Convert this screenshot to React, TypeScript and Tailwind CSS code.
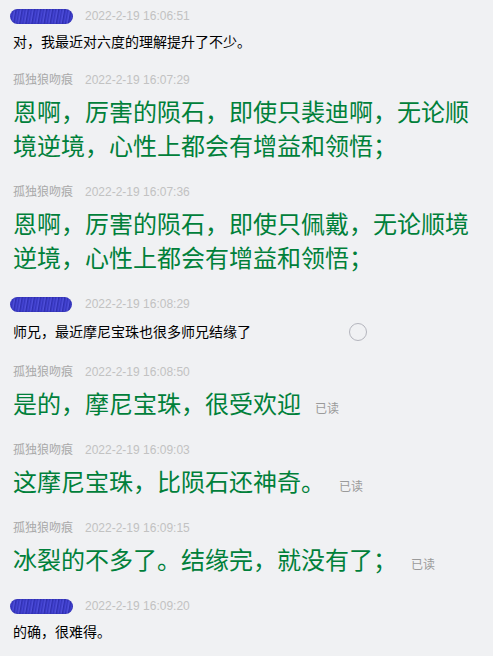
import React from "react";

type Msg = {
  name?: string;
  blob?: number;
  time: string;
  text: string;
  big?: boolean;
  read?: boolean;
  circle?: boolean;
};

const msgs: Msg[] = [
  { blob: 63, time: "2022-2-19 16:06:51", text: "对，我最近对六度的理解提升了不少。" },
  { name: "孤独狼吻痕", time: "2022-2-19 16:07:29", text: "恩啊，厉害的陨石，即使只裴迪啊，无论顺境逆境，心性上都会有增益和领悟；", big: true },
  { name: "孤独狼吻痕", time: "2022-2-19 16:07:36", text: "恩啊，厉害的陨石，即使只佩戴，无论顺境逆境，心性上都会有增益和领悟；", big: true },
  { blob: 62, time: "2022-2-19 16:08:29", text: "师兄，最近摩尼宝珠也很多师兄结缘了", circle: true },
  { name: "孤独狼吻痕", time: "2022-2-19 16:08:50", text: "是的，摩尼宝珠，很受欢迎", big: true, read: true },
  { name: "孤独狼吻痕", time: "2022-2-19 16:09:03", text: "这摩尼宝珠，比陨石还神奇。", big: true, read: true },
  { name: "孤独狼吻痕", time: "2022-2-19 16:09:15", text: "冰裂的不多了。结缘完，就没有了；", big: true, read: true },
  { blob: 65, time: "2022-2-19 16:09:20", text: "的确，很难得。" },
];

function Blob({ w }: { w: number }) {
  return (
    <div
      className="h-[15px] -ml-[3px] rounded-full bg-[#3b3bc6] bg-[repeating-linear-gradient(100deg,#2f2fb0_0px,#4646d6_2px,#3535bd_3px,#5050dc_5px,#2f2fb0_6px)] shadow-[inset_0_0_2px_#2a2aa0]"
      style={{ width: w }}
    />
  );
}

export default function App() {
  return (
    <div
      className="min-h-[656px] w-[493px] bg-[#f0f1f3] px-[13px] pt-[6px] flex flex-col gap-[18px]"
      style={{ fontFamily: '"Liberation Sans", "Noto Sans CJK SC", sans-serif' }}
    >
      {msgs.map((m, i) => (
        <div key={i} className="flex flex-col">
          <div className="flex items-center h-[20px] leading-[20px] text-[12px]">
            <div className="w-[60px] flex items-center">
              {m.blob ? <Blob w={m.blob} /> : <span className="text-[#a9a9a9] whitespace-nowrap">{m.name}</span>}
            </div>
            <span className="ml-[12px] text-[#c2c2c2]">{m.time}</span>
          </div>
          {m.big ? (
            <div className="mt-[6px] text-[24px] leading-[34px] text-[#00803a]">
              {m.text}
              {m.read && (
                <span className="ml-[14px] text-[12px] leading-[12px] text-[#9a9a9a]">已读</span>
              )}
            </div>
          ) : m.circle ? (
            <div className="mt-[6px] h-[24px] flex items-center text-[14px] text-black">
              <span className="w-[336px]">{m.text}</span>
              <span className="w-[18px] h-[18px] rounded-full border-[1.5px] border-[#b4b5bd]" />
            </div>
          ) : (
            <div className="mt-[6px] text-[14px] leading-[20px] text-black">{m.text}</div>
          )}
        </div>
      ))}
    </div>
  );
}
